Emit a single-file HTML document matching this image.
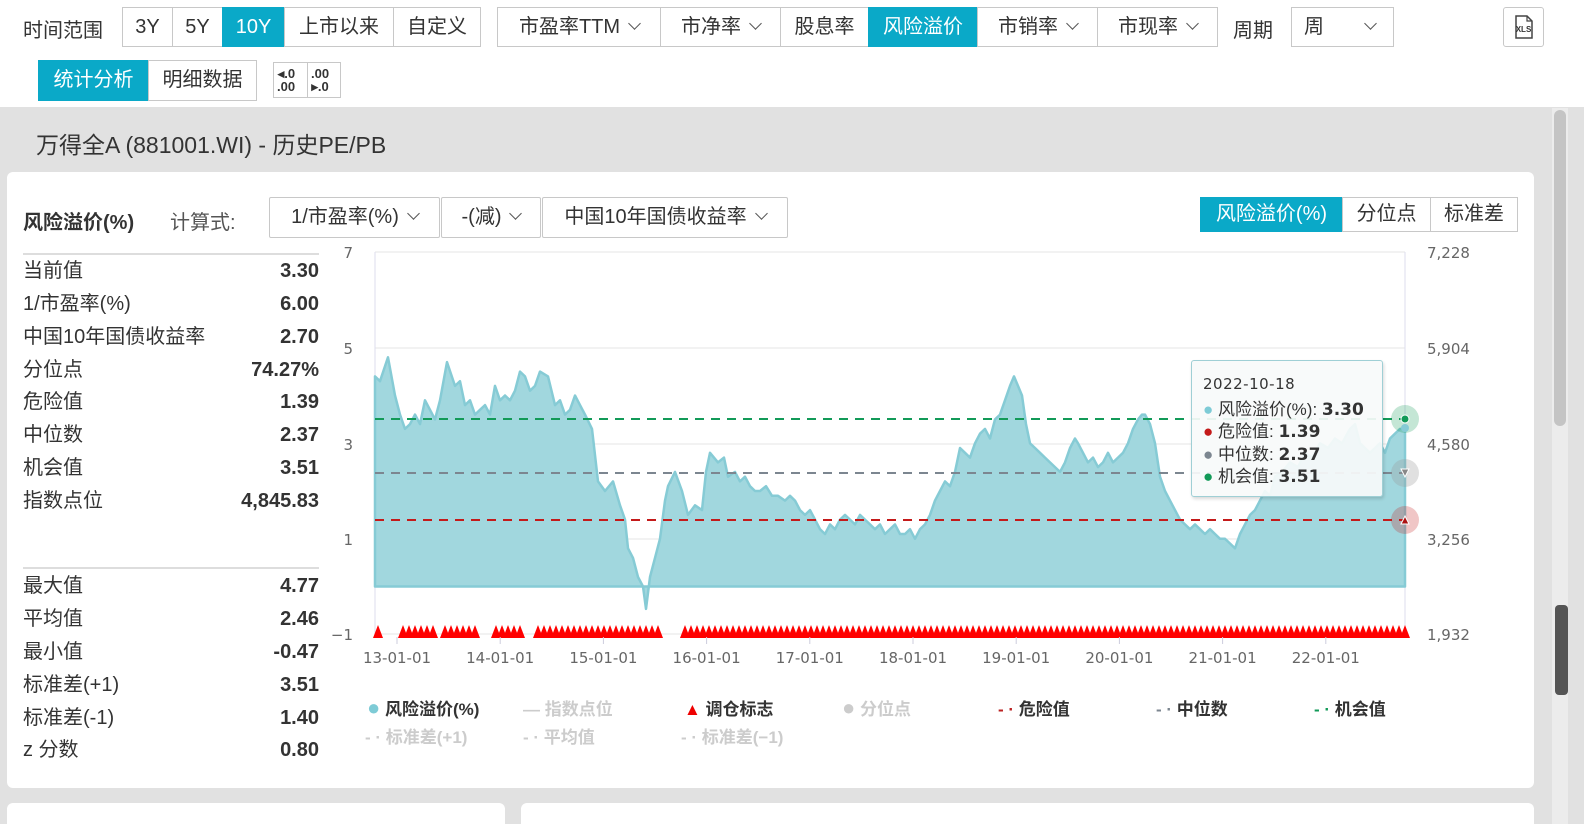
<!DOCTYPE html>
<html><head><meta charset="utf-8">
<style>
*{box-sizing:border-box;margin:0;padding:0}
html{overflow:hidden;width:1584px;height:824px}
body{width:1584px;height:824px;overflow:hidden;background:#e1e1e1;font-family:"Liberation Sans","Noto Sans CJK SC",sans-serif;color:#333;position:relative}
.top{position:absolute;left:0;top:0;width:1584px;height:107px;background:#fff}
.b{position:absolute;border:1px solid #c8c8c8;background:#fff;font-size:20px;line-height:38px;text-align:center;color:#333}
.act{background:#0aa9c8;color:#fff;border-color:#0aa9c8}
.t{position:absolute;white-space:nowrap}
.chev{display:inline-block;width:9px;height:9px;border-right:1.5px solid #555;border-bottom:1.5px solid #555;transform:rotate(45deg);margin-left:10px;position:relative;top:-5px}
.card{position:absolute;background:#fff;border-radius:6px}
.row{position:absolute;left:23px;width:296px;height:28px;line-height:28px;font-size:20px}
.row span{position:absolute;left:0;top:0}
.row b{position:absolute;right:0;top:0;font-weight:bold}
.lg{position:absolute;font-size:17px;font-weight:bold;white-space:nowrap}
</style></head><body>
<div class="top"></div>
<div class="t" style="left:23px;top:14px;font-size:20px">时间范围</div>
<div class="b" style="left:122px;top:7px;width:51px;height:40px">3Y</div>
<div class="b" style="left:172px;top:7px;width:51px;height:40px">5Y</div>
<div class="b act" style="left:222px;top:7px;width:63px;height:40px">10Y</div>
<div class="b" style="left:284px;top:7px;width:110px;height:40px">上市以来</div>
<div class="b" style="left:393px;top:7px;width:88px;height:40px">自定义</div>
<div class="b" style="left:497px;top:7px;width:164px;height:40px">市盈率TTM<span class="chev"></span></div>
<div class="b" style="left:660px;top:7px;width:121px;height:40px">市净率<span class="chev"></span></div>
<div class="b" style="left:780px;top:7px;width:89px;height:40px">股息率</div>
<div class="b act" style="left:868px;top:7px;width:110px;height:40px">风险溢价</div>
<div class="b" style="left:977px;top:7px;width:121px;height:40px">市销率<span class="chev"></span></div>
<div class="b" style="left:1097px;top:7px;width:121px;height:40px">市现率<span class="chev"></span></div>
<div class="t" style="left:1233px;top:14px;font-size:20px">周期</div>
<div class="b" style="left:1291px;top:7px;width:103px;height:40px;text-align:left;padding-left:12px">周<span class="chev" style="margin-left:42px"></span></div>
<div class="b" style="left:1503px;top:7px;width:41px;height:40px;border-radius:3px">
<svg width="39" height="38" viewBox="0 0 39 38"><path d="M12 8h11l5 5v17h-16z" fill="none" stroke="#444" stroke-width="1.5"/><path d="M23 8v5h5" fill="none" stroke="#444" stroke-width="1.2"/><text x="19.5" y="24" font-size="8" font-weight="bold" text-anchor="middle" fill="#333" font-family="Liberation Sans">XLS</text></svg></div>
<div class="b act" style="left:38px;top:60px;width:111px;height:41px">统计分析</div>
<div class="b" style="left:148px;top:60px;width:109px;height:41px">明细数据</div>
<div class="b" style="left:273px;top:62px;width:68px;height:36px;font-size:13px;line-height:13px;font-weight:bold">
<div style="position:absolute;left:3px;top:4px;text-align:right">◂.0<br>.00</div><div style="position:absolute;left:33px;top:0;width:1px;height:34px;background:#c8c8c8"></div><div style="position:absolute;left:37px;top:4px">.00<br>▸.0</div></div>

<div class="t" style="left:36px;top:126px;font-size:23px;color:#333">万得全A (881001.WI) - 历史PE/PB</div>

<div class="card" style="left:7px;top:172px;width:1527px;height:616px"></div>
<div class="card" style="left:7px;top:803px;width:498px;height:21px;border-radius:6px 6px 0 0"></div>
<div class="card" style="left:521px;top:803px;width:1013px;height:21px;border-radius:6px 6px 0 0"></div>
<div style="position:absolute;left:1552px;top:108px;width:16px;height:716px;background:#ececec"></div>
<div style="position:absolute;left:1554px;top:110px;width:12px;height:316px;background:#c4c4c4;border-radius:6px"></div>
<div style="position:absolute;left:1555px;top:605px;width:13px;height:90px;background:#555;border-radius:4px"></div>

<div class="t" style="left:23px;top:206px;font-size:20px;font-weight:bold">风险溢价(%)</div>
<div class="t" style="left:170px;top:206px;font-size:20px;color:#555">计算式:</div>
<div class="b" style="left:269px;top:197px;width:171px;height:41px;border-radius:2px">1/市盈率(%)<span class="chev"></span></div>
<div class="b" style="left:441px;top:197px;width:100px;height:41px;border-radius:2px">-(减)<span class="chev"></span></div>
<div class="b" style="left:542px;top:197px;width:246px;height:41px;border-radius:2px">中国10年国债收益率<span class="chev"></span></div>
<div class="b act" style="left:1200px;top:197px;width:143px;height:35px;line-height:33px">风险溢价(%)</div>
<div class="b" style="left:1342px;top:197px;width:89px;height:35px;line-height:33px">分位点</div>
<div class="b" style="left:1430px;top:197px;width:88px;height:35px;line-height:33px">标准差</div>

<div style="position:absolute;left:23px;top:253px;width:296px;height:2px;background:#ddd"></div>
<div class="row" style="top:257px"><span>当前值</span><b>3.30</b></div>
<div class="row" style="top:290px"><span>1/市盈率(%)</span><b>6.00</b></div>
<div class="row" style="top:323px"><span>中国10年国债收益率</span><b>2.70</b></div>
<div class="row" style="top:356px"><span>分位点</span><b>74.27%</b></div>
<div class="row" style="top:388px"><span>危险值</span><b>1.39</b></div>
<div class="row" style="top:421px"><span>中位数</span><b>2.37</b></div>
<div class="row" style="top:454px"><span>机会值</span><b>3.51</b></div>
<div class="row" style="top:487px"><span>指数点位</span><b>4,845.83</b></div>
<div style="position:absolute;left:23px;top:567px;width:296px;height:2px;background:#ddd"></div>
<div class="row" style="top:572px"><span>最大值</span><b>4.77</b></div>
<div class="row" style="top:605px"><span>平均值</span><b>2.46</b></div>
<div class="row" style="top:638px"><span>最小值</span><b>-0.47</b></div>
<div class="row" style="top:671px"><span>标准差(+1)</span><b>3.51</b></div>
<div class="row" style="top:704px"><span>标准差(-1)</span><b>1.40</b></div>
<div class="row" style="top:736px"><span>z 分数</span><b>0.80</b></div>

<svg id="ch" style="position:absolute;left:0;top:0" width="1584" height="824"></svg>

<div style="position:absolute;left:1191px;top:360px;width:192px;height:137px;background:rgba(248,250,250,0.93);border:1.5px solid #9fcfd5;border-radius:3px;box-shadow:1px 2px 3px rgba(0,0,0,.15)"></div>
<div class="t" style="left:1203px;top:375px;font-size:15px;color:#333;font-family:'DejaVu Sans',sans-serif;letter-spacing:0.5px">2022-10-18</div>
<div class="t" style="left:1203px;top:395px;font-size:17px"><span style="color:#7ecbd6">●</span> 风险溢价(%): <b style="font-family:'DejaVu Sans'">3.30</b></div>
<div class="t" style="left:1203px;top:417px;font-size:17px"><span style="color:#c41a1a">●</span> 危险值: <b style="font-family:'DejaVu Sans'">1.39</b></div>
<div class="t" style="left:1203px;top:440px;font-size:17px"><span style="color:#7c8690">●</span> 中位数: <b style="font-family:'DejaVu Sans'">2.37</b></div>
<div class="t" style="left:1203px;top:462px;font-size:17px"><span style="color:#129a58">●</span> 机会值: <b style="font-family:'DejaVu Sans'">3.51</b></div>

<div class="lg" style="left:367px;top:695px"><span style="color:#7ecbd6;font-size:22px">●</span> 风险溢价(%)</div>
<div class="lg" style="left:523px;top:695px;color:#ccc">— 指数点位</div>
<div class="lg" style="left:684px;top:695px"><span style="color:#e00">▲</span> 调仓标志</div>
<div class="lg" style="left:842px;top:695px;color:#ccc"><span style="font-size:22px">●</span> 分位点</div>
<div class="lg" style="left:998px;top:695px"><span style="color:#b22">- ·</span> 危险值</div>
<div class="lg" style="left:1156px;top:695px"><span style="color:#7c8690">- ·</span> 中位数</div>
<div class="lg" style="left:1314px;top:695px"><span style="color:#129a58">- ·</span> 机会值</div>
<div class="lg" style="left:365px;top:723px;color:#ccc">- · 标准差(+1)</div>
<div class="lg" style="left:523px;top:723px;color:#ccc">- · 平均值</div>
<div class="lg" style="left:681px;top:723px;color:#ccc">- · 标准差(−1)</div>

<script>
var s=document.getElementById('ch'),h='';
function Y(v){return 586.5-v*47.75}
[[252,'7','7,228'],[348,'5','5,904'],[444,'3','4,580'],[539,'1','3,256'],[634,'−1','1,932']].forEach(function(g){
h+='<line x1="375" x2="1405" y1="'+g[0]+'" y2="'+g[0]+'" stroke="#e6e6e6"/>';
h+='<text x="353" y="'+(g[0]+6)+'" font-size="15" fill="#666" text-anchor="end" font-family="DejaVu Sans">'+g[1]+'</text>';
h+='<text x="1427" y="'+(g[0]+6)+'" font-size="15" fill="#666" font-family="DejaVu Sans">'+g[2]+'</text>';});
h+='<line x1="375" x2="375" y1="252" y2="634" stroke="#dde"/><line x1="1405" x2="1405" y1="252" y2="634" stroke="#dde"/>';
var d=[[375,4.4],[380,4.3],[388,4.8],[395,4.0],[400,3.6],[405,3.3],[410,3.4],[415,3.6],[420,3.4],[425,3.9],[430,3.7],[435,3.5],[440,3.9],[447,4.7],[455,4.2],[460,4.3],[465,3.8],[470,3.9],[475,3.6],[480,3.7],[485,3.8],[490,3.6],[495,4.2],[500,3.9],[505,4.0],[510,3.9],[515,4.1],[520,4.5],[525,4.4],[530,4.1],[535,4.2],[540,4.5],[548,4.4],[555,3.8],[560,3.9],[565,3.6],[570,3.7],[575,4.0],[580,3.8],[585,3.6],[592,3.3],[598,2.2],[605,2.0],[613,2.2],[620,1.7],[625,1.4],[628,0.8],[633,0.6],[638,0.2],[643,0.0],[646,-0.47],[650,0.2],[655,0.6],[660,1.0],[665,1.8],[668,2.1],[675,2.4],[682,2.0],[688,1.5],[695,1.7],[702,1.6],[706,2.4],[710,2.8],[718,2.6],[724,2.7],[728,2.3],[735,2.4],[740,2.2],[745,2.3],[750,2.1],[755,2.0],[760,2.0],[766,2.1],[772,1.9],[778,1.9],[785,1.8],[790,1.9],[795,1.8],[800,1.6],[805,1.5],[810,1.6],[815,1.4],[820,1.2],[825,1.1],[830,1.3],[835,1.2],[840,1.4],[845,1.5],[850,1.4],[855,1.3],[860,1.5],[865,1.4],[870,1.3],[875,1.2],[880,1.3],[885,1.1],[890,1.2],[895,1.3],[900,1.1],[905,1.1],[910,1.2],[915,1.0],[920,1.2],[925,1.3],[930,1.5],[935,1.8],[940,2.0],[945,2.2],[950,2.1],[955,2.4],[960,2.9],[965,2.8],[970,2.7],[975,3.0],[980,3.2],[985,3.3],[990,3.1],[995,3.5],[1000,3.6],[1005,3.9],[1010,4.2],[1014,4.4],[1018,4.2],[1022,4.0],[1026,3.4],[1030,3.0],[1035,2.9],[1040,2.8],[1045,2.7],[1050,2.6],[1055,2.5],[1060,2.4],[1065,2.6],[1070,2.9],[1075,3.1],[1078,3.0],[1083,2.8],[1088,2.6],[1093,2.7],[1098,2.5],[1103,2.6],[1108,2.8],[1113,2.6],[1118,2.7],[1123,2.8],[1128,3.0],[1133,3.3],[1138,3.5],[1142,3.6],[1145,3.6],[1150,3.4],[1155,3.0],[1160,2.3],[1165,2.0],[1170,1.8],[1175,1.6],[1180,1.4],[1185,1.3],[1190,1.2],[1195,1.3],[1200,1.2],[1205,1.1],[1210,1.2],[1215,1.1],[1220,1.0],[1225,1.0],[1230,0.9],[1235,0.8],[1240,1.1],[1245,1.3],[1250,1.5],[1255,1.6],[1260,1.8],[1265,2.0],[1270,1.9],[1275,2.3],[1282,2.4],[1290,2.6],[1298,2.5],[1305,2.8],[1312,2.7],[1320,3.0],[1328,2.9],[1335,3.1],[1342,3.0],[1350,3.3],[1355,3.4],[1360,3.0],[1365,2.9],[1370,2.8],[1375,2.9],[1380,3.0],[1385,2.8],[1390,3.1],[1395,3.2],[1400,3.3],[1405,3.3]];
var p='M375 '+Y(0);d.forEach(function(q){p+=' L'+q[0]+' '+Y(q[1]).toFixed(1)});p+=' L1405 '+Y(0)+' Z';
h+='<path d="'+p+'" fill="#a1d7de" stroke="#86cbd5" stroke-width="2.5" stroke-linejoin="round"/>';
h+='<line x1="375" x2="1405" y1="419" y2="419" stroke="#129a58" stroke-width="2" stroke-dasharray="9 7"/>';
h+='<line x1="375" x2="1405" y1="473" y2="473" stroke="#7c8690" stroke-width="2" stroke-dasharray="9 7"/>';
h+='<line x1="375" x2="1405" y1="520" y2="520" stroke="#c41a1a" stroke-width="2" stroke-dasharray="9 7"/>';
h+='<circle cx="1405" cy="419" r="14" fill="#129a58" opacity=".25"/><circle cx="1405" cy="428" r="4" fill="#86cbd5"/><circle cx="1405" cy="419" r="4" fill="#129a58" stroke="#fff"/>';
h+='<circle cx="1405" cy="473" r="14" fill="#999" opacity=".3"/><path d="M1401 469h8l-4 8z" fill="#888" stroke="#fff"/>';
h+='<circle cx="1405" cy="520" r="14" fill="#c41a1a" opacity=".25"/><path d="M1401 524h8l-4-8z" fill="#a11" stroke="#fff"/>';
var r=[[378,378],[403,436],[445,478],[496,520],[538,663],[685,1408]];
r.forEach(function(a){for(var x=a[0];x<=a[1];x+=6){h+='<path d="M'+(x-5)+' 638L'+x+' 625L'+(x+5)+' 638Z" fill="#f00"/>'}});
var lb=['13-01-01','14-01-01','15-01-01','16-01-01','17-01-01','18-01-01','19-01-01','20-01-01','21-01-01','22-01-01'];
lb.forEach(function(t,i){var x=397+i*103.2;h+='<line x1="'+x+'" x2="'+x+'" y1="637" y2="644" stroke="#ccd"/><text x="'+x+'" y="663" font-size="15" fill="#666" text-anchor="middle" font-family="DejaVu Sans">'+t+'</text>'});
s.innerHTML=h;
</script>
</body></html>
